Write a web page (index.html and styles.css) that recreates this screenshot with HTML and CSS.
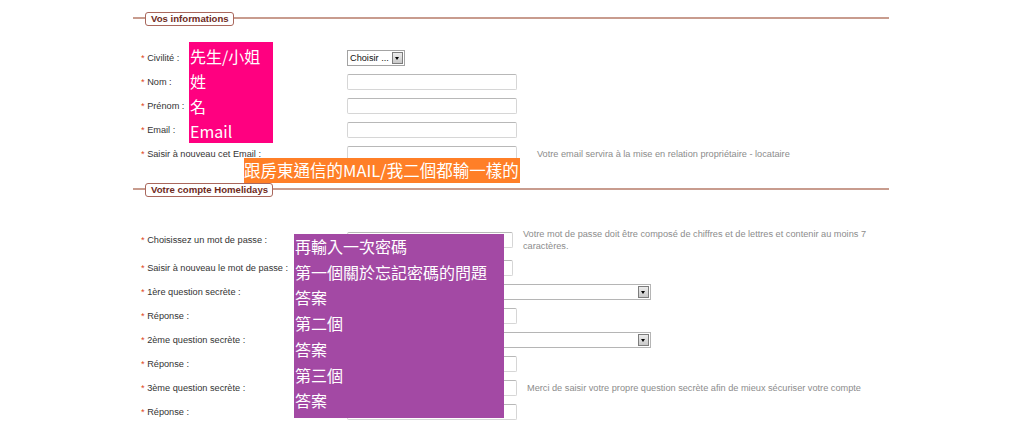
FILE: index.html
```html
<!DOCTYPE html>
<html lang="fr">
<head>
    <meta charset="UTF-8">
    <title>Inscription Homelidays</title>
    <link rel="stylesheet" href="styles.css">
</head>
<body>
    <div class="form">
        <!-- Vos informations -->
        <div class="legend-bar"><span class="legend">Vos informations</span></div>
        <div class="section section-info">
            <div class="row">
                <label class="label"><span class="req">*</span> Civilité :</label>
                <div class="select-box small"><span class="select-text">Choisir ...</span><span class="select-btn"></span></div>
            </div>
            <div class="row">
                <label class="label"><span class="req">*</span> Nom :</label>
                <div class="input"></div>
            </div>
            <div class="row">
                <label class="label"><span class="req">*</span> Prénom :</label>
                <div class="input"></div>
            </div>
            <div class="row">
                <label class="label"><span class="req">*</span> Email :</label>
                <div class="input"></div>
            </div>
            <div class="row">
                <label class="label"><span class="req">*</span> Saisir à nouveau cet Email :</label>
                <div class="input"></div>
                <p class="help">Votre email servira à la mise en relation propriétaire - locataire</p>
            </div>
        </div>

        <!-- Votre compte Homelidays -->
        <div class="legend-bar"><span class="legend">Votre compte Homelidays</span></div>
        <div class="section section-account">
            <div class="row row-first">
                <label class="label"><span class="req">*</span> Choisissez un mot de passe :</label>
                <div class="input pass"></div>
                <p class="help wrap">Votre mot de passe doit être composé de chiffres et de lettres et contenir au moins 7 caractères.</p>
            </div>
            <div class="row">
                <label class="label"><span class="req">*</span> Saisir à nouveau le mot de passe :</label>
                <div class="input pass"></div>
            </div>
            <div class="row">
                <label class="label"><span class="req">*</span> 1ère question secrète :</label>
                <div class="select-box wide"><span class="select-text"></span><span class="select-btn"></span></div>
            </div>
            <div class="row">
                <label class="label"><span class="req">*</span> Réponse :</label>
                <div class="input"></div>
            </div>
            <div class="row">
                <label class="label"><span class="req">*</span> 2ème question secrète :</label>
                <div class="select-box wide"><span class="select-text"></span><span class="select-btn"></span></div>
            </div>
            <div class="row">
                <label class="label"><span class="req">*</span> Réponse :</label>
                <div class="input"></div>
            </div>
            <div class="row">
                <label class="label"><span class="req">*</span> 3ème question secrète :</label>
                <div class="input"></div>
                <p class="help">Merci de saisir votre propre question secrète afin de mieux sécuriser votre compte</p>
            </div>
            <div class="row">
                <label class="label"><span class="req">*</span> Réponse :</label>
                <div class="input"></div>
            </div>
        </div>
    </div>

    <!-- Notes painted over the screenshot -->
    <div class="note note-pink">
        <div>先生/小姐</div>
        <div>姓</div>
        <div>名</div>
        <div>Email</div>
    </div>
    <div class="note note-orange">跟房東通信的MAIL/我二個都輸一樣的</div>
    <div class="note note-purple">
        <div>再輸入一次密碼</div>
        <div>第一個關於忘記密碼的問題</div>
        <div>答案</div>
        <div>第二個</div>
        <div>答案</div>
        <div>第三個</div>
        <div>答案</div>
    </div>
</body>
</html>
```

FILE: styles.css
```css
/* Homelidays registration form */
body {
    margin: 0;
    font-family: 'Liberation Sans', Arial, sans-serif;
    color: #333;
    background: #fff;
}

.form {
    width: 756px;
    margin-left: 133px;
    padding-top: 12px;
}

/* section titles drawn like a fieldset legend */
.legend-bar {
    display: flex;
    align-items: flex-start;
    height: 14px;
}

.legend-bar::before,
.legend-bar::after {
    content: '';
    height: 2px;
    margin-top: 5px;
    background: #c89c8e;
}

.legend-bar::before {
    width: 12px;
}

.legend-bar::after {
    flex: 1;
}

.legend {
    height: 12px;
    padding: 0 4px 0 5px;
    border: 1px solid #a9675c;
    border-radius: 3px;
    font-size: 9.6px;
    font-weight: bold;
    line-height: 12px;
    color: #6e2a1c;
}

.section-info {
    margin-top: 20px;
    margin-bottom: 17px;
}

.section-account {
    margin-top: 35px;
}

.row {
    display: flex;
    align-items: center;
    height: 24px;
    padding-left: 8px;
}

.row-first {
    align-items: flex-start;
}

.label {
    width: 206px;
    font-size: 9.2px;
    line-height: 16px;
    color: #333;
}

.req {
    color: #de4421;
}

.input {
    width: 168px;
    height: 14px;
    border: 1px solid #d6d6d6;
    border-top-color: #b8b8b8;
    border-radius: 2px;
    background: #fff;
}

.input.pass {
    width: 164px;
}

.select-box {
    display: flex;
    align-items: center;
    height: 14px;
    border: 1px solid #a3a3a3;
    background: #fff;
}

.select-box.small {
    width: 56px;
}

.select-box.wide {
    width: 302px;
    border-color: #b5b5b5;
}

.select-text {
    flex: 1;
    padding-left: 2px;
    font-size: 9.2px;
    color: #111;
}

.select-btn {
    position: relative;
    width: 9px;
    height: 10px;
    margin-right: 1px;
    border: 1px solid #7d7d7d;
    background: linear-gradient(#ececec, #c9c9c9);
}

.select-btn::after {
    content: '';
    position: absolute;
    left: 2px;
    top: 4px;
    border-left: 2.5px solid transparent;
    border-right: 2.5px solid transparent;
    border-top: 3px solid #000;
}

.help {
    margin: 0 0 0 20px;
    font-size: 9.2px;
    color: #8c8c8c;
}

.section-account .help {
    margin-left: 10px;
}

.help.wrap {
    width: 346px;
    margin-top: -4px;
    line-height: 12px;
}

/* coloured notes */
.note {
    position: absolute;
    color: #fff;
    font-family: 'Noto Sans CJK TC', 'Noto Sans', sans-serif;
    font-size: 16px;
}

.note-pink {
    left: 189px;
    top: 42px;
    width: 83px;
    height: 99px;
    padding: 2px 0 0 1px;
    line-height: 25px;
    background: #ff0080;
}

.note-orange {
    left: 244px;
    top: 158px;
    width: 276px;
    height: 25px;
    font-size: 16.5px;
    line-height: 25px;
    background: #ff7f27;
}

.note-purple {
    left: 294px;
    top: 234px;
    width: 209px;
    height: 184px;
    padding-left: 1px;
    line-height: 25.7px;
    background: #a349a4;
}
```
